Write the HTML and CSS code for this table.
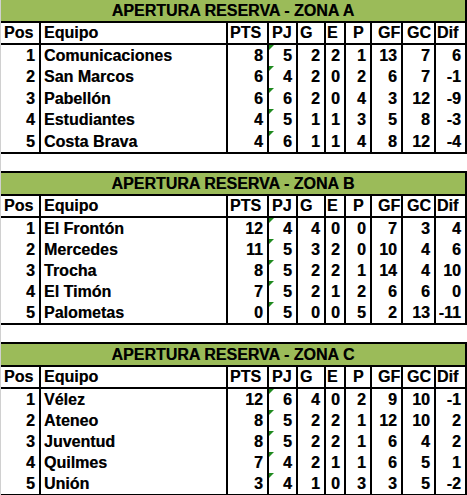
FILE: index.html
```html
<!DOCTYPE html>
<html lang="es">
<head>
<meta charset="utf-8">
<title>Apertura Reserva</title>
<link rel="stylesheet" href="styles.css">
</head>
<body>
<div class="page">

  <section class="zone first">
    <div class="title">APERTURA RESERVA - ZONA A</div>
    <div class="row head">
      <div class="c pos">Pos</div><div class="c team">Equipo</div><div class="c pts">PTS</div><div class="c pj">PJ</div><div class="c g">G</div><div class="c e">E</div><div class="c p">P</div><div class="c gf">GF</div><div class="c gc">GC</div><div class="c dif">Dif</div>
    </div>
    <div class="body">
      <div class="row"><div class="c pos">1</div><div class="c team">Comunicaciones</div><div class="c pts">8</div><div class="c pj">5</div><div class="c g">2</div><div class="c e">2</div><div class="c p">1</div><div class="c gf">13</div><div class="c gc">7</div><div class="c dif">6</div></div>
      <div class="row"><div class="c pos">2</div><div class="c team">San Marcos</div><div class="c pts">6</div><div class="c pj">4</div><div class="c g">2</div><div class="c e">0</div><div class="c p">2</div><div class="c gf">6</div><div class="c gc">7</div><div class="c dif">-1</div></div>
      <div class="row"><div class="c pos">3</div><div class="c team">Pabellón</div><div class="c pts">6</div><div class="c pj">6</div><div class="c g">2</div><div class="c e">0</div><div class="c p">4</div><div class="c gf">3</div><div class="c gc">12</div><div class="c dif">-9</div></div>
      <div class="row"><div class="c pos">4</div><div class="c team">Estudiantes</div><div class="c pts">4</div><div class="c pj">5</div><div class="c g">1</div><div class="c e">1</div><div class="c p">3</div><div class="c gf">5</div><div class="c gc">8</div><div class="c dif">-3</div></div>
      <div class="row"><div class="c pos">5</div><div class="c team">Costa Brava</div><div class="c pts">4</div><div class="c pj">6</div><div class="c g">1</div><div class="c e">1</div><div class="c p">4</div><div class="c gf">8</div><div class="c gc">12</div><div class="c dif">-4</div></div>
    </div>
  </section>

  <section class="zone">
    <div class="title">APERTURA RESERVA - ZONA B</div>
    <div class="row head">
      <div class="c pos">Pos</div><div class="c team">Equipo</div><div class="c pts">PTS</div><div class="c pj">PJ</div><div class="c g">G</div><div class="c e">E</div><div class="c p">P</div><div class="c gf">GF</div><div class="c gc">GC</div><div class="c dif">Dif</div>
    </div>
    <div class="body">
      <div class="row"><div class="c pos">1</div><div class="c team">El Frontón</div><div class="c pts">12</div><div class="c pj">4</div><div class="c g">4</div><div class="c e">0</div><div class="c p">0</div><div class="c gf">7</div><div class="c gc">3</div><div class="c dif">4</div></div>
      <div class="row"><div class="c pos">2</div><div class="c team">Mercedes</div><div class="c pts">11</div><div class="c pj">5</div><div class="c g">3</div><div class="c e">2</div><div class="c p">0</div><div class="c gf">10</div><div class="c gc">4</div><div class="c dif">6</div></div>
      <div class="row"><div class="c pos">3</div><div class="c team">Trocha</div><div class="c pts">8</div><div class="c pj">5</div><div class="c g">2</div><div class="c e">2</div><div class="c p">1</div><div class="c gf">14</div><div class="c gc">4</div><div class="c dif">10</div></div>
      <div class="row"><div class="c pos">4</div><div class="c team">El Timón</div><div class="c pts">7</div><div class="c pj">5</div><div class="c g">2</div><div class="c e">1</div><div class="c p">2</div><div class="c gf">6</div><div class="c gc">6</div><div class="c dif">0</div></div>
      <div class="row"><div class="c pos">5</div><div class="c team">Palometas</div><div class="c pts">0</div><div class="c pj">5</div><div class="c g">0</div><div class="c e">0</div><div class="c p">5</div><div class="c gf">2</div><div class="c gc">13</div><div class="c dif">-11</div></div>
    </div>
  </section>

  <section class="zone">
    <div class="title">APERTURA RESERVA - ZONA C</div>
    <div class="row head">
      <div class="c pos">Pos</div><div class="c team">Equipo</div><div class="c pts">PTS</div><div class="c pj">PJ</div><div class="c g">G</div><div class="c e">E</div><div class="c p">P</div><div class="c gf">GF</div><div class="c gc">GC</div><div class="c dif">Dif</div>
    </div>
    <div class="body">
      <div class="row"><div class="c pos">1</div><div class="c team">Vélez</div><div class="c pts">12</div><div class="c pj">6</div><div class="c g">4</div><div class="c e">0</div><div class="c p">2</div><div class="c gf">9</div><div class="c gc">10</div><div class="c dif">-1</div></div>
      <div class="row"><div class="c pos">2</div><div class="c team">Ateneo</div><div class="c pts">8</div><div class="c pj">5</div><div class="c g">2</div><div class="c e">2</div><div class="c p">1</div><div class="c gf">12</div><div class="c gc">10</div><div class="c dif">2</div></div>
      <div class="row"><div class="c pos">3</div><div class="c team">Juventud</div><div class="c pts">8</div><div class="c pj">5</div><div class="c g">2</div><div class="c e">2</div><div class="c p">1</div><div class="c gf">6</div><div class="c gc">4</div><div class="c dif">2</div></div>
      <div class="row"><div class="c pos">4</div><div class="c team">Quilmes</div><div class="c pts">7</div><div class="c pj">4</div><div class="c g">2</div><div class="c e">1</div><div class="c p">1</div><div class="c gf">6</div><div class="c gc">5</div><div class="c dif">1</div></div>
      <div class="row"><div class="c pos">5</div><div class="c team">Unión</div><div class="c pts">3</div><div class="c pj">4</div><div class="c g">1</div><div class="c e">0</div><div class="c p">3</div><div class="c gf">3</div><div class="c gc">5</div><div class="c dif">-2</div></div>
    </div>
  </section>

</div>
</body>
</html>
```

FILE: styles.css
```css
html, body {
  margin: 0;
  padding: 0;
  background: #ffffff;
}

body {
  font-family: "Liberation Sans", Arial, sans-serif;
  font-weight: bold;
  font-size: 16px;
  color: #000;
}

.page {
  width: 466px;
  border-left: 1px solid #d0d0d0;
  display: flex;
  flex-direction: column;
  gap: 17px;
  min-height: 495px;
  overflow: hidden;
}

.zone {
  border-top: 2px solid #000;
  border-bottom: 2px solid #000;
  text-shadow: 0.35px 0 0 rgba(0, 0, 0, 0.55);
}

.zone.first {
  margin-top: -2px;
}

.title {
  height: 21px;
  line-height: 22px;
  background: #9bbb59;
  text-align: center;
  border-right: 2px solid #000;
  border-bottom: 2px solid #000;
  white-space: nowrap;
}

.row {
  display: grid;
  grid-template-columns: 40px 187px 41px 29px 28px 20px 26px 31px 33px 31px;
  height: 21px;
}

.first .body .row {
  height: 21.4px;
}

.row.head {
  height: 20px;
  border-bottom: 2px solid #000;
}

.c {
  box-sizing: border-box;
  border-right: 2px solid #000;
  line-height: 21px;
  white-space: nowrap;
  text-align: right;
  padding-right: 4px;
  position: relative;
}

.head .c {
  line-height: 20px;
  text-align: left;
  padding-right: 0;
}

.c.team {
  text-align: left;
  padding-left: 3px;
}

.head .pos { padding-left: 3px; }
.head .team { padding-left: 3px; }
.head .pts { padding-left: 2px; }
.head .pj { padding-left: 3px; }
.head .g { padding-left: 2px; }
.head .e { padding-left: 1px; }
.head .p { padding-left: 7px; }
.head .gf { padding-left: 6px; }
.head .gc { padding-left: 4px; }
.head .dif { padding-left: 1px; }

.body .pj::before {
  content: "";
  position: absolute;
  left: 0;
  top: 0;
  width: 0;
  height: 0;
  border-top: 5px solid #1f8a1f;
  border-right: 5px solid transparent;
}
```
